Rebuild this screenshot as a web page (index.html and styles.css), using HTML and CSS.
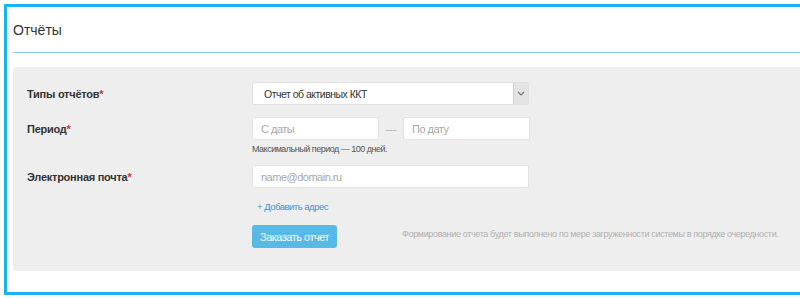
FILE: index.html
```html
<!DOCTYPE html>
<html lang="ru">
<head>
    <meta charset="UTF-8" />
    <meta name="viewport" content="width=device-width, initial-scale=1.0"/>
    <title>Отчёты</title>
    <link rel="stylesheet" href="styles.css">
</head>
<body>
    <div class="frame">
        <div class="page-header">
            <h1>Отчёты</h1>
        </div>

        <form class="report-form">
            <div class="form-row">
                <label class="form-label">Типы отчётов<span class="req">*</span></label>
                <div class="select">
                    <span class="select-value">Отчет об активных ККТ</span>
                    <span class="select-arrow">
                        <svg width="8" height="5" viewBox="0 0 8 5"><path d="M1 1l3 3 3-3" fill="none" stroke="#777" stroke-width="1.2"/></svg>
                    </span>
                </div>
            </div>

            <div class="form-row row-period">
                <label class="form-label">Период<span class="req">*</span></label>
                <div class="period">
                    <input class="input input-date" type="text" placeholder="С даты" />
                    <span class="dash">—</span>
                    <input class="input input-date" type="text" placeholder="По дату" />
                </div>
            </div>
            <div class="form-row">
                <span class="form-label"></span>
                <div class="hint">Максимальный период — 100 дней.</div>
            </div>

            <div class="form-row row-email">
                <label class="form-label">Электронная почта<span class="req">*</span></label>
                <input class="input input-wide" type="text" placeholder="name@domain.ru" />
            </div>
            <div class="form-row row-add">
                <span class="form-label"></span>
                <a class="add-link" href="#">+ Добавить адрес</a>
            </div>

            <div class="form-row row-submit">
                <span class="form-label"></span>
                <button class="btn" type="button">Заказать отчет</button>
                <span class="note">Формирование отчета будет выполнено по мере загруженности системы в порядке очередности.</span>
            </div>
        </form>
    </div>
</body>
</html>
```

FILE: styles.css
```css
body {
    font-family: "Liberation Sans", Arial, sans-serif;
    margin: 0;
    background: #fff;
    color: #333;
}

.frame {
    margin: 4px 0 0 4px;
    width: 788px;
    height: 285px;
    border: 3px solid #17b4f1;
    padding-left: 6px;
    overflow: hidden;
}

.page-header {
    height: 45px;
    border-bottom: 1px solid #86cdef;
    display: flex;
    align-items: center;
}

.page-header h1 {
    margin: 0;
    font-size: 14px;
    font-weight: 400;
    color: #333;
}

.report-form {
    margin-top: 14px;
    background: #eeeeee;
    border-radius: 4px 0 0 4px;
    padding: 15px 0 23px 14px;
    width: 820px;
}

.form-row {
    display: flex;
    align-items: center;
}

.form-label {
    width: 225px;
    flex-shrink: 0;
    font-size: 11px;
    font-weight: 700;
    letter-spacing: -0.25px;
    color: #333;
}

.req {
    color: #d2322d;
}

.select {
    width: 277px;
    height: 23px;
    box-sizing: border-box;
    background: #fff;
    border: 1px solid #e0e0e0;
    border-radius: 2px;
    display: flex;
    align-items: center;
}

.select-value {
    flex: 1;
    padding-left: 11px;
    font-size: 10.5px;
    letter-spacing: -0.5px;
    color: #333;
}

.select-arrow {
    width: 14px;
    height: 100%;
    background: #e4e4e4;
    border-left: 1px solid #cfcfcf;
    display: flex;
    align-items: center;
    justify-content: center;
}

.row-period {
    margin-top: 12px;
}

.period {
    display: flex;
    align-items: center;
}

.input {
    height: 23px;
    box-sizing: border-box;
    border: 1px solid #e3e3e3;
    border-radius: 2px;
    background: #fff;
    padding: 0 8px;
    font-family: inherit;
    font-size: 11px;
    letter-spacing: -0.5px;
    color: #333;
    outline: none;
}

.input::placeholder {
    color: #a8a8a8;
}

.input-date {
    width: 127px;
}

.input-wide {
    width: 277px;
}

.dash {
    width: 24px;
    text-align: center;
    color: #b0b0b0;
    font-size: 11px;
}

.hint {
    margin-top: 3px;
    font-size: 9px;
    line-height: 12px;
    letter-spacing: -0.5px;
    color: #555;
}

.row-email {
    margin-top: 10px;
}

.row-add {
    margin-top: 12px;
}

.add-link {
    padding-left: 5px;
    font-size: 9.5px;
    line-height: 14px;
    letter-spacing: -0.5px;
    color: #3598d4;
    text-decoration: none;
}

.row-submit {
    margin-top: 11px;
}

.btn {
    width: 85px;
    height: 23px;
    border: none;
    border-radius: 3px;
    background: #58b9e4;
    color: #fff;
    font-family: inherit;
    font-size: 11px;
    letter-spacing: -0.5px;
    padding: 0;
    cursor: pointer;
}

.note {
    margin-left: 65px;
    padding-bottom: 6px;
    font-size: 9px;
    letter-spacing: -0.35px;
    color: #b0b0b0;
    white-space: nowrap;
}
```
